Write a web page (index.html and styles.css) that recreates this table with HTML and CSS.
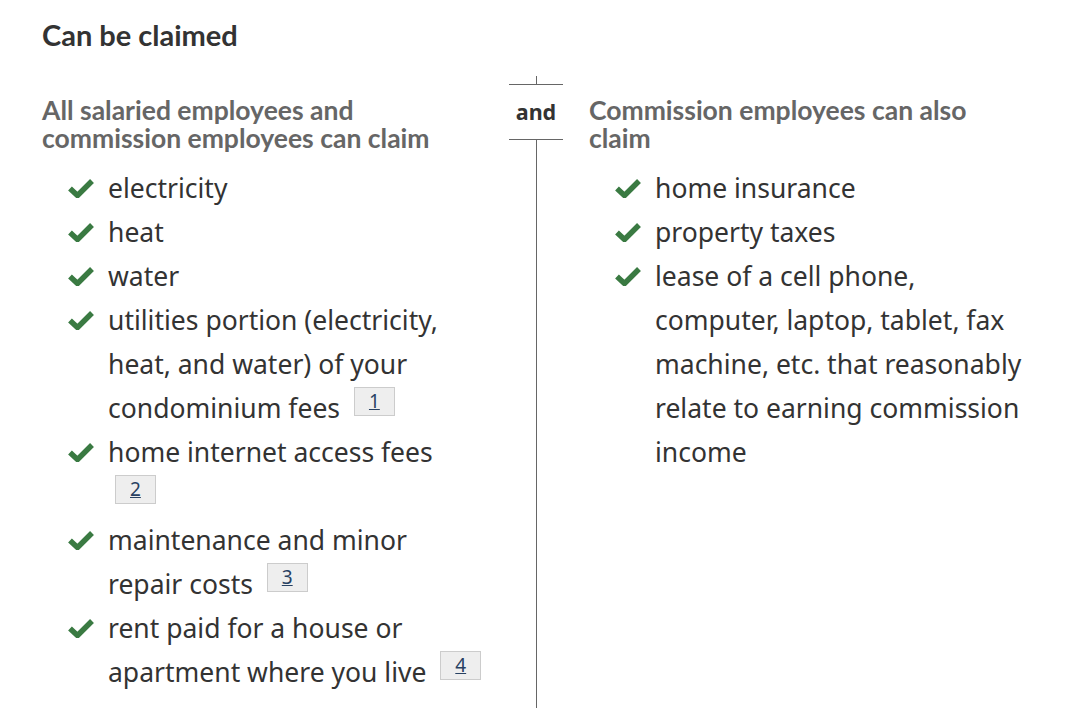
FILE: index.html
```html
<!DOCTYPE html>
<html lang="en">
<head>
<meta charset="utf-8">
<title>Can be claimed</title>
<link rel="stylesheet" href="styles.css">
</head>
<body>
<main class="page">
  <h2 class="title">Can be claimed</h2>
  <div class="compare">
    <section class="col">
      <h3 class="col-title">All salaried employees and commission employees can claim</h3>
      <ul class="checklist">
        <li><span class="chk"><svg viewBox="0 0 26 20"><path d="M2 10.5 L9.5 17.5 L24 3" /></svg></span><span class="txt">electricity</span></li>
        <li><span class="chk"><svg viewBox="0 0 26 20"><path d="M2 10.5 L9.5 17.5 L24 3" /></svg></span><span class="txt">heat</span></li>
        <li><span class="chk"><svg viewBox="0 0 26 20"><path d="M2 10.5 L9.5 17.5 L24 3" /></svg></span><span class="txt">water</span></li>
        <li><span class="chk"><svg viewBox="0 0 26 20"><path d="M2 10.5 L9.5 17.5 L24 3" /></svg></span><span class="txt">utilities portion (electricity, heat, and water) of your condominium fees <sup class="fn"><a href="#fn1">1</a></sup></span></li>
        <li><span class="chk"><svg viewBox="0 0 26 20"><path d="M2 10.5 L9.5 17.5 L24 3" /></svg></span><span class="txt">home internet access fees <sup class="fn"><a href="#fn2">2</a></sup></span></li>
        <li><span class="chk"><svg viewBox="0 0 26 20"><path d="M2 10.5 L9.5 17.5 L24 3" /></svg></span><span class="txt">maintenance and minor repair costs <sup class="fn"><a href="#fn3">3</a></sup></span></li>
        <li><span class="chk"><svg viewBox="0 0 26 20"><path d="M2 10.5 L9.5 17.5 L24 3" /></svg></span><span class="txt">rent paid for a house or apartment where you live <sup class="fn"><a href="#fn4">4</a></sup></span></li>
      </ul>
    </section>
    <div class="divider">
      <span class="tick"></span>
      <span class="and">and</span>
      <span class="stem"></span>
    </div>
    <section class="col">
      <h3 class="col-title">Commission employees can also claim</h3>
      <ul class="checklist">
        <li><span class="chk"><svg viewBox="0 0 26 20"><path d="M2 10.5 L9.5 17.5 L24 3" /></svg></span><span class="txt">home insurance</span></li>
        <li><span class="chk"><svg viewBox="0 0 26 20"><path d="M2 10.5 L9.5 17.5 L24 3" /></svg></span><span class="txt">property taxes</span></li>
        <li><span class="chk"><svg viewBox="0 0 26 20"><path d="M2 10.5 L9.5 17.5 L24 3" /></svg></span><span class="txt">lease of a cell phone, computer, laptop, tablet, fax machine, etc. that reasonably relate to earning commission income</span></li>
      </ul>
    </section>
  </div>
</main>
</body>
</html>
```

FILE: styles.css
```css
html, body {
  margin: 0;
  padding: 0;
  background: #fff;
}

.page {
  padding: 18px 0 0 42px;
  font-family: "Noto Sans", "Open Sans", sans-serif;
  color: #333;
}

.title {
  margin: 0;
  font-family: Lato, "Noto Sans", sans-serif;
  font-weight: 700;
  font-size: 29px;
  line-height: 34px;
  color: #333;
}

.compare {
  display: grid;
  grid-template-columns: 443px 54px 436px;
  column-gap: 24px;
  margin-top: 24px;
}

.compare > .col:last-child {
  margin-left: 2px;
}

.col {
  padding-top: 20px;
}

.col-title {
  margin: 0 0 14px 0;
  font-family: Lato, "Noto Sans", sans-serif;
  font-weight: 700;
  font-size: 26.5px;
  line-height: 28px;
  color: #666;
}

.checklist {
  list-style: none;
  margin: 0 0 14px 0;
  padding: 0 0 0 26px;
  font-size: 26.5px;
  line-height: 44px;
  color: #333;
}

.checklist li {
  display: flex;
  align-items: flex-start;
}

.chk {
  flex: none;
  width: 26px;
  height: 44px;
  margin-right: 14px;
  display: flex;
  align-items: center;
}

.chk svg {
  width: 26px;
  height: 20px;
  fill: none;
  stroke: #3a7a42;
  stroke-width: 5.5;
  stroke-linecap: butt;
  stroke-linejoin: miter;
}

.txt {
  flex: 1;
  min-width: 0;
}

.fn {
  display: inline-block;
  vertical-align: 10px;
  margin-left: 7px;
  font-size: 19px;
  line-height: 27px;
  padding: 0 14px;
  background: #eee;
  border: 1px solid #ccc;
}

.fn a {
  color: #284162;
  text-decoration: underline;
}

.divider {
  display: flex;
  flex-direction: column;
  align-items: center;
}

.tick {
  width: 1px;
  height: 8px;
  background: #666;
}

.and {
  align-self: stretch;
  text-align: center;
  border-top: 1px solid #666;
  border-bottom: 1px solid #666;
  font-weight: 700;
  font-size: 21.5px;
  line-height: 54px;
  color: #333;
}

.stem {
  flex: 1;
  width: 1px;
  background: #666;
}
```
